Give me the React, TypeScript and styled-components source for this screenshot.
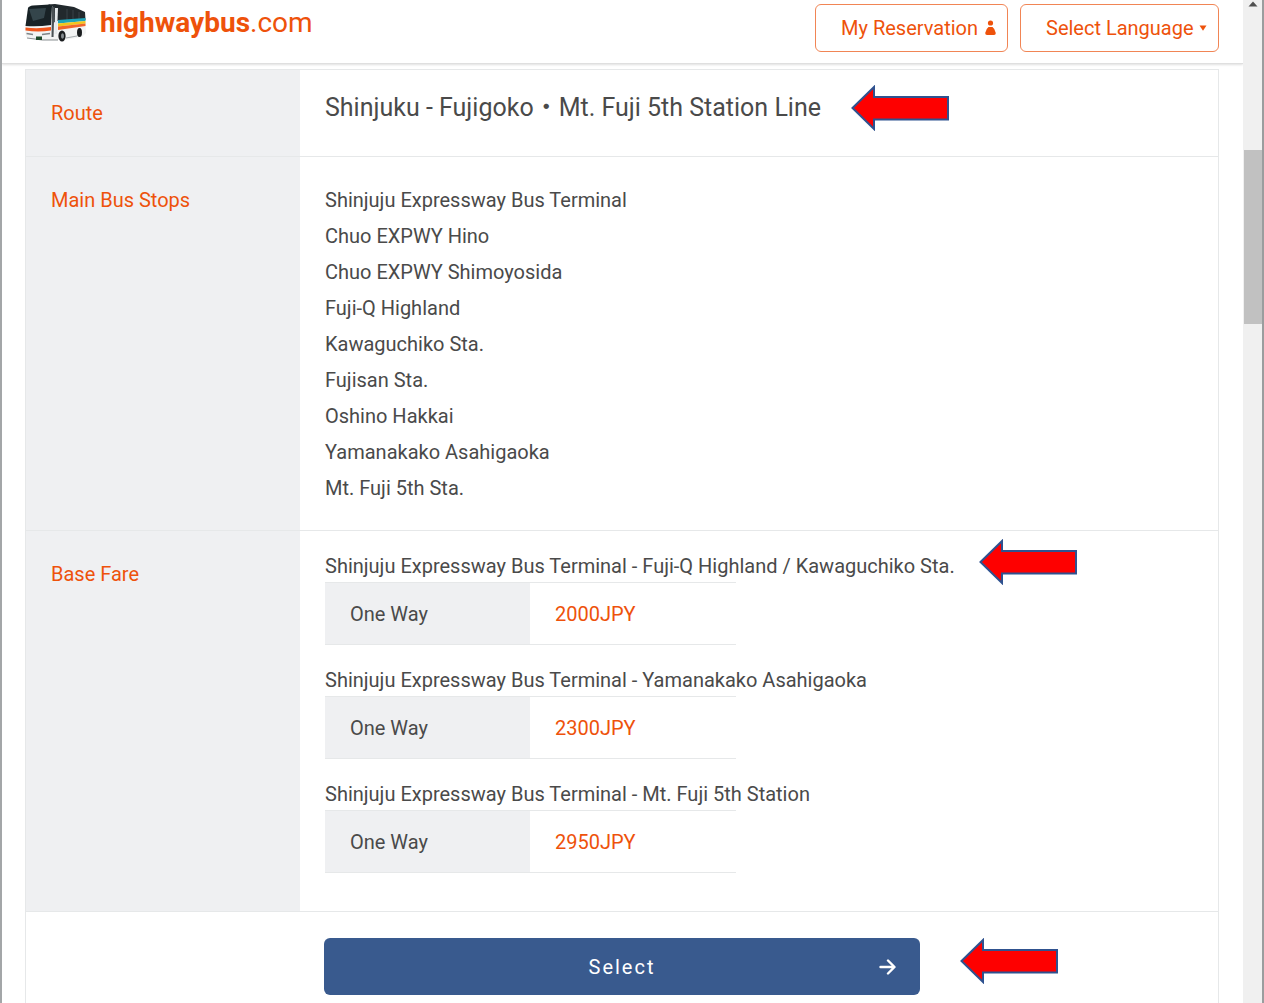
import React from "react";
import styled, { createGlobalStyle } from "styled-components";

const orange = "#ee520b";
const ink = "#4a4a4a";
const line = "#e6e8e9";
const shade = "#eff0f2";

const GlobalStyle = createGlobalStyle`
  *, *::before, *::after { box-sizing: border-box; }
  body {
    margin: 0;
    background: #fff;
    color: ${ink};
    font: 400 20px/36px Roboto, "Noto Sans CJK JP", sans-serif;
  }
`;

const Window = styled.div`
  display: flex;
  height: 100vh;
  overflow: hidden;
  border-left: 2px solid #a3a6a8;
  border-right: 2px solid #9b9d9e;
`;

const Page = styled.div`
  flex: 1;
  min-width: 0;
`;

const Header = styled.header`
  display: flex;
  justify-content: space-between;
  align-items: flex-start;
  height: 64px;
  padding: 4px 24px 0 22px;
  border-bottom: 1px solid #dfdfdf;
  box-shadow: 0 1px 2px rgba(0, 0, 0, 0.12);
`;

const Brand = styled.a`
  display: flex;
  align-items: center;
  gap: 12px;
  color: ${orange};
  font-size: 28px;
  text-decoration: none;
`;

const Actions = styled.div`
  display: flex;
  gap: 12px;
`;

const ReserveButton = styled.button`
  display: flex;
  align-items: center;
  gap: 7px;
  height: 48px;
  padding: 0 11px 0 25px;
  border: 1px solid #f18555;
  border-radius: 6px;
  background: #fff;
  color: ${orange};
  font: inherit;
`;

const LanguageBox = styled.label`
  display: flex;
  align-items: center;
  gap: 5px;
  height: 48px;
  padding: 0 11px 0 25px;
  border: 1px solid #f18555;
  border-radius: 6px;
  color: ${orange};
`;

const LanguageSelect = styled.select`
  appearance: none;
  padding: 0;
  border: 0;
  background: transparent;
  color: inherit;
  font: inherit;
`;

const Main = styled.main`
  padding: 5px 24px 0 23px;
`;

const RouteTable = styled.table`
  width: 100%;
  border: 1px solid ${line};
  border-collapse: separate;
  border-spacing: 0;
`;

const Label = styled.th`
  width: 274px;
  padding: 25px 25px 24px;
  border-bottom: 1px solid ${line};
  background: ${shade};
  color: ${orange};
  font-weight: 400;
  text-align: left;
  vertical-align: top;
`;

const Value = styled.td`
  padding: 25px 25px 24px;
  border-bottom: 1px solid ${line};
  vertical-align: top;
`;

const Title = styled.h1`
  margin: 0 0 12px;
  font-size: 25px;
  font-weight: 400;
  line-height: 25px;
`;

const Stops = styled.ul`
  margin: 0;
  padding: 0;
  list-style: none;
`;

const Fares = styled.div`
  display: grid;
  gap: 25px;
  padding-bottom: 14px;
`;

const FareName = styled.h2`
  margin: 0 0 6px;
  font-size: 20px;
  font-weight: 400;
  line-height: 20px;
`;

const FareTable = styled.table`
  width: 411px;
  max-width: 100%;
  table-layout: fixed;
  border-top: 1px solid ${line};
  border-bottom: 1px solid ${line};
  border-collapse: separate;
  border-spacing: 0;
`;

const FareKind = styled.th`
  width: 205px;
  padding: 13px 25px 12px;
  background: ${shade};
  font-weight: 400;
  text-align: left;
`;

const FarePrice = styled.td`
  padding: 13px 25px 12px;
  color: ${orange};
`;

const ActionCell = styled.td`
  padding: 26px 0;
`;

const SelectHolder = styled.div`
  position: relative;
  width: 50%;
  margin: 0 auto;
`;

const SelectButton = styled.button`
  display: grid;
  grid-template-columns: 1fr auto 1fr;
  align-items: center;
  width: 100%;
  height: 57px;
  padding: 0 24px;
  border: 0;
  border-radius: 6px;
  background: #395a8e;
  color: #fff;
  font: inherit;
  letter-spacing: 2px;

  svg {
    justify-self: end;
  }
`;

const Marked = styled.span`
  position: relative;
`;

const Pointer = styled.svg<{ $gap: number; $rise: number }>`
  position: absolute;
  left: 100%;
  bottom: 50%;
  width: 98px;
  height: 46px;
  margin: 0 0 ${(p) => p.$rise - 23}px ${(p) => p.$gap}px;
`;

const ScrollTrack = styled.div`
  display: flex;
  flex-direction: column;
  align-items: center;
  width: 19px;
  padding-left: 1px;
  background: #f0f0f0;
`;

const ScrollUp = styled.svg`
  display: block;
  width: 10px;
  height: 6px;
  margin: 1px 0 143px;
`;

const ScrollThumb = styled.div`
  width: 100%;
  height: 174px;
  background: #c1c1c1;
`;

function RedArrow({ gap, rise }: { gap: number; rise: number }) {
  return (
    <Pointer $gap={gap} $rise={rise} viewBox="0 0 98 46" aria-hidden="true">
      <path
        d="M1.5 23 L23 2 V12 H97 V34.5 H23 V44 Z"
        fill="#fe0000"
        stroke="#2f528f"
        strokeWidth="2"
      />
    </Pointer>
  );
}

function BusLogo() {
  return (
    <svg width="64" height="38" viewBox="0 0 64 38" aria-hidden="true">
      <path d="M4 4 Q5 2 9 1.5 L27 0.5 L50 3 L61 8 L62 29 L58 33 L40 36 L20 36 L3 34 Q1 33 1.5 22Z" fill="#f3f4f4" />
      <path d="M4 4 Q5 2 9 1.5 L26 0.5 L28 2 L27 21 Q14 23 1.5 22Z" fill="#182226" />
      <path d="M5 5 L22 4 L20 14 L9 17Z" fill="#34454b" />
      <path d="M24 0.5 L31 0 L50 3 L61 8 L61.5 16 L33 17 L29 19 L29 3Z" fill="#22292d" />
      <path d="M43 5 V16 M49 6 V16 M55 8 V16" stroke="#4a555b" strokeWidth="0.6" />
      <path d="M28 3 L30.5 3 L29.5 33 L27.500 33Z" fill="#4b5256" />
      <path d="M31 4 L34 4 L33 30 L30.500 30Z" fill="#e6eaec" />
      <path d="M34 16 L61.5 14 V17 L34 19.5Z" fill="#20a4b8" />
      <path d="M34 19.5 L61.5 17 V19.500 L34 22.5Z" fill="#f3c51c" />
      <path d="M34 22.5 L61.5 19.5 V22 L34 26Z" fill="#f1662b" />
      <path d="M1.5 23.5 Q14 25 27 23 V26.5 Q14 28.5 1.5 26.5Z" fill="#f0561d" />
      <path d="M2.500 29.500 L9 30.5 M18 30.5 L26 29.500" stroke="#7d8487" strokeWidth="1.4" />
      <path d="M3 34 Q18 37 34 36" fill="none" stroke="#6d7376" strokeWidth="0.8" />
      <rect x="12" y="32.5" width="6" height="3.5" fill="#1f4a2b" />
      <ellipse cx="38" cy="32" rx="3.6" ry="5.500" fill="#1a1d1f" />
      <ellipse cx="38.5" cy="32" rx="1.5" ry="2.800" fill="#858c90" />
      <ellipse cx="55.5" cy="28.500" rx="2.5" ry="4.5" fill="#1a1d1f" />
      <path d="M42 34 L53 32" stroke="#a5aaad" strokeWidth="1" />
    </svg>
  );
}

const stops = [
  "Shinjuju Expressway Bus Terminal",
  "Chuo EXPWY Hino",
  "Chuo EXPWY Shimoyosida",
  "Fuji-Q Highland",
  "Kawaguchiko Sta.",
  "Fujisan Sta.",
  "Oshino Hakkai",
  "Yamanakako Asahigaoka",
  "Mt. Fuji 5th Sta.",
];

const fares = [
  { name: "Shinjuju Expressway Bus Terminal - Fuji-Q Highland / Kawaguchiko Sta.", price: "2000JPY", marked: true },
  { name: "Shinjuju Expressway Bus Terminal - Yamanakako Asahigaoka", price: "2300JPY", marked: false },
  { name: "Shinjuju Expressway Bus Terminal - Mt. Fuji 5th Station", price: "2950JPY", marked: false },
];

export default function App() {
  return (
    <>
      <GlobalStyle />
      <Window>
        <Page>
          <Header>
            <Brand href="#">
              <BusLogo />
              <span>
                <b>highwaybus</b>.com
              </span>
            </Brand>
            <Actions>
              <ReserveButton type="button">
                My Reservation
                <svg width="11" height="16" viewBox="0 0 11 16" fill={orange} aria-hidden="true">
                  <circle cx="5.5" cy="3" r="2.6" />
                  <path d="M3.5 7 H7.5 Q9.800 8.5 10.8 13 Q10.8 15 9 15 H2 Q0.2 15 0.2 13 Q1.200 8.5 3.5 7Z" />
                </svg>
              </ReserveButton>
              <LanguageBox>
                <LanguageSelect aria-label="Select Language" defaultValue="">
                  <option value="">Select Language</option>
                </LanguageSelect>
                <svg width="8" height="6" viewBox="0 0 8 6" fill={orange} aria-hidden="true">
                  <path d="M0.5 0.5 H7.5 L4 5.8Z" />
                </svg>
              </LanguageBox>
            </Actions>
          </Header>
          <Main>
            <RouteTable>
              <tbody>
                <tr>
                  <Label scope="row">Route</Label>
                  <Value>
                    <Title>
                      <Marked>
                        Shinjuku - Fujigoko・Mt. Fuji 5th Station Line
                        <RedArrow gap={30} rise={0} />
                      </Marked>
                    </Title>
                  </Value>
                </tr>
                <tr>
                  <Label scope="row">Main Bus Stops</Label>
                  <Value>
                    <Stops>
                      {stops.map((stop) => (
                        <li key={stop}>{stop}</li>
                      ))}
                    </Stops>
                  </Value>
                </tr>
                <tr>
                  <Label scope="row">Base Fare</Label>
                  <Value>
                    <Fares>
                      {fares.map((fare) => (
                        <section key={fare.name}>
                          <FareName>
                            <Marked>
                              {fare.name}
                              {fare.marked && <RedArrow gap={24} rise={4} />}
                            </Marked>
                          </FareName>
                          <FareTable>
                            <tbody>
                              <tr>
                                <FareKind scope="row">One Way</FareKind>
                                <FarePrice>{fare.price}</FarePrice>
                              </tr>
                            </tbody>
                          </FareTable>
                        </section>
                      ))}
                    </Fares>
                  </Value>
                </tr>
                <tr>
                  <ActionCell colSpan={2}>
                    <SelectHolder>
                      <SelectButton type="button">
                        <span />
                        Select
                        <svg width="17" height="16" viewBox="0 0 17 16" fill="none" stroke="#fff" strokeWidth="2.4" strokeLinecap="round" strokeLinejoin="round" aria-hidden="true">
                          <path d="M1.5 8 H15 M9 1.500 L15.5 8 L9 14.5" />
                        </svg>
                      </SelectButton>
                      <RedArrow gap={40} rise={6} />
                    </SelectHolder>
                  </ActionCell>
                </tr>
              </tbody>
            </RouteTable>
          </Main>
        </Page>
        <ScrollTrack aria-hidden="true">
          <ScrollUp viewBox="0 0 10 6">
            <path d="M0.5 5.5 L5 0.5 L9.5 5.5Z" fill="#505050" />
          </ScrollUp>
          <ScrollThumb />
        </ScrollTrack>
      </Window>
    </>
  );
}
